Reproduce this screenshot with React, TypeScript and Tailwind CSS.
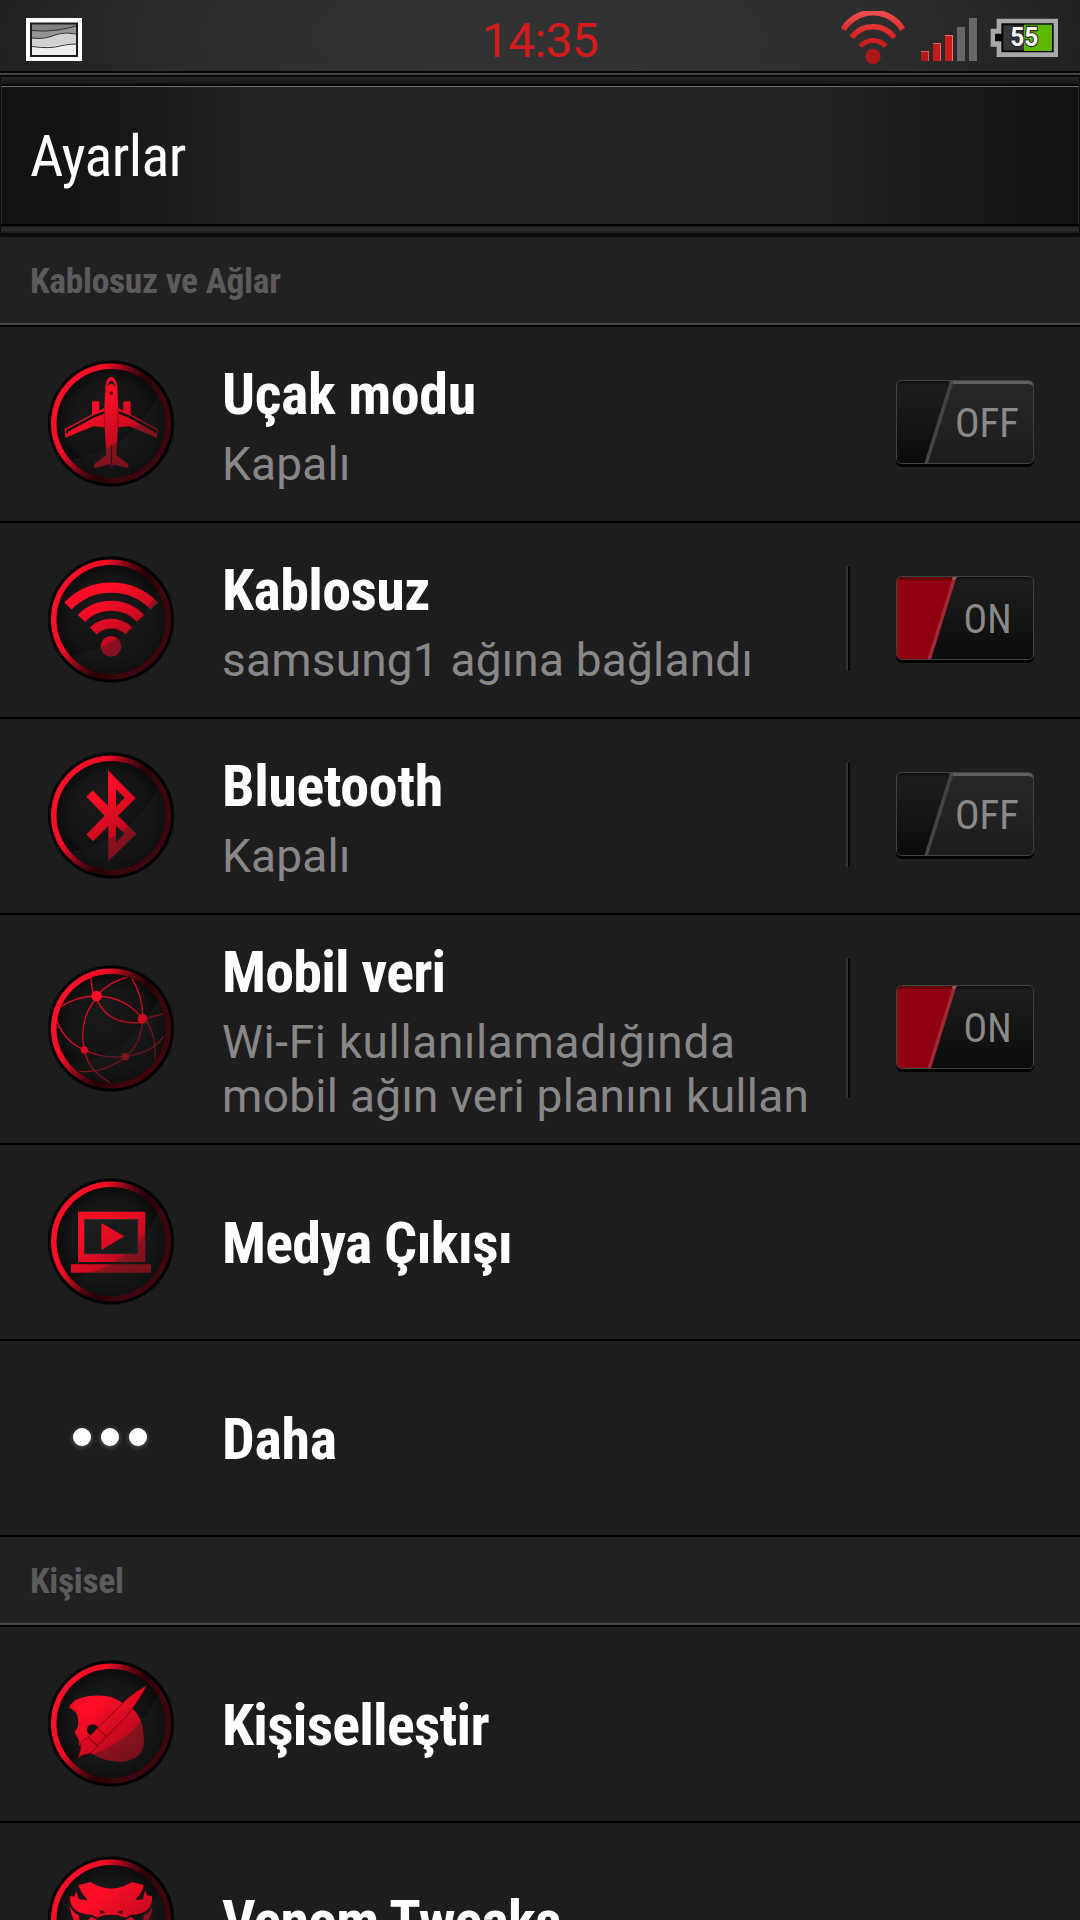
import type { ReactNode } from 'react'

type Item = {
  id: string
  title: string
  tracking: string
  lines?: { text: string; tracking: string }[]
  state?: 'on' | 'off'
  separator?: boolean
  icon: ReactNode
}

const wireless: Item[] = [
  {
    id: 'airplane',
    title: 'Uçak modu',
    tracking: 'tracking-[-0.4px]',
    lines: [{ text: 'Kapalı', tracking: 'tracking-[0.2px]' }],
    state: 'off',
    icon: <Badge id="airplane"><Plane /></Badge>,
  },
  {
    id: 'wifi',
    title: 'Kablosuz',
    tracking: 'tracking-[-0.6px]',
    lines: [{ text: 'samsung1 ağına bağlandı', tracking: 'tracking-[0.2px]' }],
    state: 'on',
    separator: true,
    icon: <Badge id="wifi"><Wifi /></Badge>,
  },
  {
    id: 'bluetooth',
    title: 'Bluetooth',
    tracking: 'tracking-[-0.4px]',
    lines: [{ text: 'Kapalı', tracking: 'tracking-[0.2px]' }],
    state: 'off',
    separator: true,
    icon: <Badge id="bluetooth"><Bluetooth /></Badge>,
  },
  {
    id: 'data',
    title: 'Mobil veri',
    tracking: 'tracking-[-0.8px]',
    lines: [
      { text: 'Wi-Fi kullanılamadığında', tracking: 'tracking-[0.65px]' },
      { text: 'mobil ağın veri planını kullan', tracking: 'tracking-[0.3px]' },
    ],
    state: 'on',
    separator: true,
    icon: <Badge id="data"><Globe /></Badge>,
  },
  { id: 'media', title: 'Medya Çıkışı', tracking: 'tracking-[-0.75px]', icon: <Badge id="media"><Laptop /></Badge> },
  { id: 'more', title: 'Daha', tracking: 'tracking-[-0.3px]', icon: <Dots /> },
]

const personal: Item[] = [
  { id: 'personalize', title: 'Kişiselleştir', tracking: 'tracking-[-0.75px]', icon: <Badge id="personalize"><Palette /></Badge> },
  { id: 'venom', title: 'Venom Tweaks', tracking: 'tracking-[-0.8px]', icon: <Badge id="venom"><Snake /></Badge> },
]

export default function App() {
  return (
    <div className="flex h-[1920px] w-[1080px] flex-col overflow-hidden bg-[#1d1d1d] font-['Roboto',sans-serif] text-white">
      <StatusBar />
      <TitleBar />
      <SectionHeader title="Kablosuz ve Ağlar" />
      {wireless.map(item => <Row key={item.id} item={item} />)}
      <SectionHeader title="Kişisel" />
      {personal.map(item => <Row key={item.id} item={item} />)}
    </div>
  )
}

function StatusBar() {
  return (
    <div className="grid h-[75px] shrink-0 grid-cols-3 border-b-2 border-[#454545] bg-[radial-gradient(ellipse_620px_200px_at_50%_50%,#333333_0%,#2d2d2d_55%,#1c1c1c_100%)] shadow-[inset_0_-2px_0_#050505]">
      <div className="flex items-start pt-[18px] pl-[26px]">
        <svg className="h-[43px] w-[56px]" viewBox="0 0 56 43">
          <rect width="56" height="43" fill="#fff" />
          <rect x="4" y="4.500" width="48" height="34.500" fill="#1c1c1c" />
          <rect x="6" y="6.500" width="44" height="30" fill="#828282" />
          <path d="M6 13 Q20 14 32 12 T50 8 V37 H6Z" fill="#959595" />
          <path d="M6 20 Q18 22 32 16 Q40 14 50 16 V37 H6Z" fill="#d2d2d2" />
          <path d="M6 28 Q20 30 34 27 Q42 25 50 26 V37 H6Z" fill="#f0f0f0" />
          <path d="M6 12.500 Q20 14 32 12 T50 8 M6 20 Q18 22 32 16 Q40 14 50 16 M6 28.500 Q24 31 34 28 Q42 26 50 26" stroke="#333" strokeWidth="1" fill="none" />
        </svg>
      </div>
      <div className="pt-[11px] text-center text-[48px] leading-[60px] tracking-[-0.6px] text-[#d41a1a]">14:35</div>
      <div className="flex items-start justify-end pr-[21px]">
        <svg className="mt-[11px] mr-[16px] h-[54px] w-[64px]" viewBox="0 0 192 162">
          <defs>
            <linearGradient id="signalRed" gradientUnits="userSpaceOnUse" x1="0" y1="0" x2="0" y2="150">
              <stop offset="0" stopColor="#ee5050" />
              <stop offset="0.5" stopColor="#d92222" />
              <stop offset="1" stopColor="#a81414" />
            </linearGradient>
          </defs>
          <g fill="none" stroke="url(#signalRed)">
            <path d="M7 55 A104 104 0 0 1 185 55" strokeWidth="18" />
            <path d="M32 80 A79 79 0 0 1 160 80" strokeWidth="16" />
            <path d="M58 106 A50 50 0 0 1 134 106" strokeWidth="15" />
          </g>
          <circle cx="96" cy="136" r="23" fill="#ad1717" />
        </svg>
        <div className="mt-[18px] mr-[13px] flex h-[43px] items-end gap-[4px]">
          <div className="h-[10px] w-[8px] bg-[#b51a1a] shadow-[inset_-1px_1px_0_#dc5555]" />
          <div className="h-[18px] w-[8px] bg-[#c21c1c] shadow-[inset_-1px_1px_0_#e06060]" />
          <div className="h-[26px] w-[8px] bg-[#c91d1d] shadow-[inset_-1px_1px_0_#f07070]" />
          <div className="h-[34px] w-[8px] bg-[#686666]" />
          <div className="h-[43px] w-[8px] bg-[#686666]" />
        </div>
        <svg className="mt-[18px] h-[39px] w-[69px]" viewBox="0 0 207 117">
          <path d="M20 2 H204 V117 H20 V86 H2 V32 H20Z" fill="#a9a9a9" />
          <path d="M34 16 H191 V103 H34 V70 H15 V47 H34Z" fill="#080808" />
          <path d="M40 22 H105 V97 H40Z" fill="#363636" />
          <path d="M102 20 H186 V99 H102Z" fill="#5cb800" />
          <text x="103" y="84" textAnchor="middle" textLength="84" lengthAdjust="spacingAndGlyphs" fontSize="80" fontWeight="700" fill="#fff" stroke="#262626" strokeWidth="7" paintOrder="stroke" className="font-['Roboto']">55</text>
        </svg>
      </div>
    </div>
  )
}

function TitleBar() {
  return (
    <div className="flex h-[162px] shrink-0 flex-col bg-[#0d0d0d] px-[1px]">
      <div className="h-[11px] border-t-2 border-b-2 border-[#060606] bg-linear-to-b from-[#272727] to-[#161616]" />
      <div className="flex h-[138px] items-center border-x border-t border-x-[#2c2c2c] border-t-[#6c6c6c] bg-[linear-gradient(90deg,#111111_0%,#171717_11%,#222222_23%,#222222_76%,#191919_88%,#111111_100%)] pl-[28px]">
        <h1 className="font-['Roboto_Condensed'] text-[58px] leading-[68px] font-[450] tracking-[-0.6px]">Ayarlar</h1>
      </div>
      <div className="h-[9px] border-t-2 border-black bg-linear-to-b from-[#1a1a1a] via-[#2d2d2d] to-[#1d1d1d]" />
    </div>
  )
}

function SectionHeader({ title }: { title: string }) {
  return (
    <div className="shrink-0 border-b-2 border-black">
      <div className="flex h-[88px] items-center border-b-2 border-[#484848] bg-[#212121] pt-[4px] pl-[30px]">
        <h2 className="font-['Roboto_Condensed'] text-[35.500px] leading-none font-bold tracking-[-0.3px] text-[#5b5b5b]">{title}</h2>
      </div>
    </div>
  )
}

function Row({ item }: { item: Item }) {
  const { title, tracking, lines, state, separator, icon } = item
  const tall = lines && lines.length > 1
  return (
    <div className={`flex shrink-0 items-center border-b-2 border-black pl-[48px] ${tall ? 'h-[230px]' : 'h-[196px]'}`}>
      {icon}
      <div className={`ml-[46px] flex-1 ${lines ? 'pb-[6px]' : 'pt-[3px]'}`}>
        <div className={`font-['Roboto_Condensed'] text-[58px] leading-[85px] font-bold whitespace-nowrap ${tracking}`}>{title}</div>
        {lines?.map(line => (
          <div key={line.text} className={`text-[46px] leading-[54px] whitespace-nowrap text-[#888888] ${line.tracking}`}>{line.text}</div>
        ))}
      </div>
      {separator && <div className="mt-[44px] mb-[46px] w-[4px] self-stretch border-r-2 border-l-2 border-r-black border-l-[#333333]" />}
      {state && (
        <div className="flex w-[230px] justify-end pr-[46px]">
          <Toggle id={item.id} on={state === 'on'} />
        </div>
      )}
    </div>
  )
}

function Toggle({ id, on }: { id: string; on: boolean }) {
  return (
    <svg className="h-[88px] w-[138px]" viewBox="0 0 138 88">
      <defs>
        <linearGradient id={`track-${id}`} x1="0" y1="0" x2="0" y2="1">
          <stop offset="0" stopColor="#0c0c0c" />
          <stop offset="0.07" stopColor="#1d1d1d" />
          <stop offset="1" stopColor="#0b0b0b" />
        </linearGradient>
        <linearGradient id={`knob-${id}`} x1="0" y1="0" x2="0" y2="1">
          <stop offset="0" stopColor="#282828" />
          <stop offset="1" stopColor="#1c1c1c" />
        </linearGradient>
        <clipPath id={`clip-${id}`}>
          <rect x="0.500" y="0.500" width="137" height="83" rx="5" />
        </clipPath>
      </defs>
      <rect x="0" y="3" width="138" height="84" rx="6" fill="#000" />
      <g clipPath={`url(#clip-${id})`}>
        <rect width="138" height="84" fill={`url(#track-${id})`} />
        {on ? (
          <>
            <path d="M0 0 H60 L34 84 H0Z" fill="#8f0010" />
            <path d="M0 0 H60 L59 4 H0Z" fill="#65000b" />
            <path d="M59 0 L33 84" stroke="#9f2a34" strokeWidth="3.500" />
            <path d="M57 3.500 L60 0" stroke="#8a6064" strokeWidth="3" />
          </>
        ) : (
          <>
            <path d="M54 0 H138 V84 H28Z" fill={`url(#knob-${id})`} />
            <path d="M54 1 H138 V7 Q136 4 131 4 H54Z" fill="#5d5d5d" />
            <path d="M56 1 L30 84" stroke="#444444" strokeWidth="3.500" />
          </>
        )}
      </g>
      <rect x="0.500" y="0.500" width="137" height="83" rx="5" fill="none" stroke="#424242" />
      {on ? (
        <text x="67.500" y="57" textLength="48" lengthAdjust="spacingAndGlyphs" fontSize="40" fill="#8a8a8a" className="font-['Roboto_Condensed']">ON</text>
      ) : (
        <text x="59" y="57" textLength="64" lengthAdjust="spacingAndGlyphs" fontSize="40" fill="#8a8a8a" className="font-['Roboto_Condensed']">OFF</text>
      )}
    </svg>
  )
}

/* Round glossy frame shared by all the red icons */
function Badge({ id, children }: { id: string; children: ReactNode }) {
  return (
    <svg className="h-[128px] w-[128px] shrink-0" viewBox="0 0 128 128">
      <defs>
        <linearGradient id={`ring-${id}`} x1="0.1" y1="0.2" x2="0.8" y2="0.55">
          <stop offset="0" stopColor="#ff1028" />
          <stop offset="0.3" stopColor="#ee0d24" />
          <stop offset="0.58" stopColor="#5c0610" />
          <stop offset="0.75" stopColor="#250205" />
          <stop offset="1" stopColor="#3c060c" />
        </linearGradient>
        <radialGradient id={`face-${id}`} cx="0.5" cy="0.5" r="0.5">
          <stop offset="0" stopColor="#1b1b1b" />
          <stop offset="0.75" stopColor="#161616" />
          <stop offset="1" stopColor="#0c0c0c" />
        </radialGradient>
        <radialGradient id={`rim-${id}`} cx="0.5" cy="0.5" r="0.5">
          <stop offset="0.97" stopColor="#000" />
          <stop offset="1" stopColor="#000" stopOpacity="0" />
        </radialGradient>
        <linearGradient id={`shade-${id}`} gradientUnits="userSpaceOnUse" x1="48" y1="42" x2="94" y2="102">
          <stop offset="0" stopColor="#000" stopOpacity="0" />
          <stop offset="1" stopColor="#000" stopOpacity="0.4" />
        </linearGradient>
        <clipPath id={`disc-${id}`}>
          <circle cx="63" cy="63.500" r="54.500" />
        </clipPath>
      </defs>
      <circle cx="63" cy="63.500" r="64" fill={`url(#rim-${id})`} />
      <circle cx="63" cy="63.500" r="57" fill="none" stroke={`url(#ring-${id})`} strokeWidth="6" />
      <circle cx="63" cy="63.500" r="54.500" fill={`url(#face-${id})`} />
      <g clipPath={`url(#disc-${id})`}>
        <g fill="#ff0d26">{children}</g>
        <rect width="128" height="128" fill={`url(#shade-${id})`} />
        <path d="M20 100 Q84 90 110 34 L128 60 V128 H20Z" fill="#222222" fillOpacity="0.35" />
      </g>
    </svg>
  )
}

function Plane() {
  return (
    <g transform="translate(-18 -20) scale(0.3333)">
      <rect x="186" y="184" width="22" height="42" rx="4" />
      <rect x="280" y="184" width="22" height="42" rx="4" />
      <path d="M244 110 C232 112 226 128 226 146 L223 204 L104 267 L106 293 L190 259 L224 262 L229 345 L193 372 L193 385 L238 373 L244 388 L250 373 L295 385 L295 372 L259 345 L264 262 L298 259 L381 293 L383 267 L265 204 L262 146 C262 128 256 112 244 110Z" />
      <g fill="none" stroke="#151515">
        <path d="M110 279 L112 272 L190 230 L222 217" strokeWidth="7" />
        <path d="M377 279 L375 272 L298 230 L266 217" strokeWidth="7" />
        <path d="M231 140 Q244 104 257 140 Q244 121 231 140Z" fill="#151515" strokeWidth="1" />
        <path d="M244 315 V388" strokeWidth="4" strokeOpacity="0.8" />
        <path d="M224 205 V262 M264 205 V262" stroke="#7a0a14" strokeWidth="2" />
      </g>
      <circle cx="244" cy="159" r="5" fill="#300" />
    </g>
  )
}

function Wifi() {
  return (
    <g transform="translate(-18 -215.300) scale(0.3333)">
      <g fill="none" stroke="#ff0d26">
        <path d="M114 796 A180 180 0 0 1 373 796" strokeWidth="31" />
        <path d="M154 833 A123 123 0 0 1 332 833" strokeWidth="30" />
        <path d="M190 871 A76 76 0 0 1 297 871" strokeWidth="29" />
      </g>
      <circle cx="243" cy="917" r="31" />
    </g>
  )
}

function Bluetooth() {
  return (
    <g transform="translate(-18 -21.500) scale(0.3333)">
      <path
        fillRule="evenodd"
        d="M234 119 L317 203 L264 256 L319 310 L235 392 V286 L190 332 L169 312 L224 256 L169 199 L188 180 L234 226Z M258 176 V228 L284 202Z M258 286 V335 L284 310Z"
      />
    </g>
  )
}

function Globe() {
  return (
    <g transform="translate(-18 -234.300) scale(0.3333)">
      <g fill="none" stroke="#e00d24" strokeWidth="4">
        <path d="M182 740 Q185 770 192 796" />
        <path d="M200 796 Q240 750 292 740" />
        <path d="M92 828 Q140 797 200 796 Q290 800 338 865" />
        <path d="M200 806 Q235 886 338 875" />
        <path d="M306 743 Q340 800 338 865 Q335 940 286 978" />
        <path d="M338 865 L398 850" />
        <path d="M350 870 Q380 920 375 985" />
        <path d="M196 806 Q145 870 163 958 Q175 1020 240 1055" />
        <path d="M80 868 Q100 930 163 958 Q220 985 286 978 Q370 965 400 918" />
        <path d="M148 1022 Q225 1028 286 978" />
      </g>
      <circle cx="200" cy="796" r="16" />
      <circle cx="338" cy="865" r="15" />
      <circle cx="163" cy="958" r="11" />
      <circle cx="286" cy="978" r="11" />
    </g>
  )
}

function Laptop() {
  return (
    <g transform="translate(-18 -27.300) scale(0.3333)">
      <path fillRule="evenodd" d="M144 183 H346 V334 H144Z M163 206 V310 H324 V206Z" />
      <rect x="164" y="207" width="159" height="102" fill="#1d1e1e" stroke="#2c3636" strokeWidth="3" />
      <path d="M214 217 L283 257 L214 298Z" />
      <path d="M123 341 H363 V366 H123Z" />
    </g>
  )
}

function Palette() {
  return (
    <g transform="translate(-4 -4.500) scale(0.3333)">
      <path d="M75 157 C85 130 120 121 160 120 C200 119 222 133 240 145 L266 160 C290 180 300 215 300 262 C300 295 275 314 235 319 C195 319 165 308 148 296 L135 293 L105 268 L106 258 L92 230 C94 224 103 220 103 200 C102 175 95 165 75 157Z" />
      <circle cx="146" cy="223" r="17" fill="#141414" />
      <g stroke="#7d0814" strokeWidth="2.500">
        <path d="M308 90 C285 103 250 125 225 155 L160 218 L187 244 L245 185 C270 155 290 125 308 90Z" />
        <path d="M160 218 L187 244 L160 271 L133 246Z" />
        <path d="M133 246 L160 271 C150 285 140 293 130 296 C118 297 112 300 102 308 C108 290 110 280 111 265 C115 255 122 250 133 246Z" />
      </g>
    </g>
  )
}

function Snake() {
  return (
    <g transform="translate(-4 -6) scale(0.3333)">
      <path d="M104 105 L140 96 L152 103 Q180 116 202 116 Q225 116 252 103 L264 96 L299 105 Q300 120 275 149 L297 148 L299 134 L305 121 L308 136 L324 138 Q326 160 317 175 Q300 193 260 195 L245 203 L222 196 L202 194 L180 196 L160 203 L145 195 Q105 193 88 175 Q78 160 77 146 L80 137 L90 141 L97 124 L104 147 L131 151 Q106 122 104 105Z" />
      <path d="M168 180 L184 187 L170 192Z M236 180 L220 187 L234 192Z" fill="#200" />
      <path d="M78 167 Q88 190 104 196 L112 240 Q82 215 78 167Z M326 167 Q316 190 300 196 L292 240 Q322 215 326 167Z" />
      <path d="M128 214 L142 200 L168 214Z M276 214 L262 200 L236 214Z" />
    </g>
  )
}

function Dots() {
  return (
    <div className="flex w-[128px] shrink-0 gap-[10px] pb-[2px] pl-[25px]">
      {[0, 1, 2].map(i => (
        <span key={i} className="size-[18px] rounded-full bg-white shadow-[0_1px_5px_rgba(255,255,255,0.35)]" />
      ))}
    </div>
  )
}
